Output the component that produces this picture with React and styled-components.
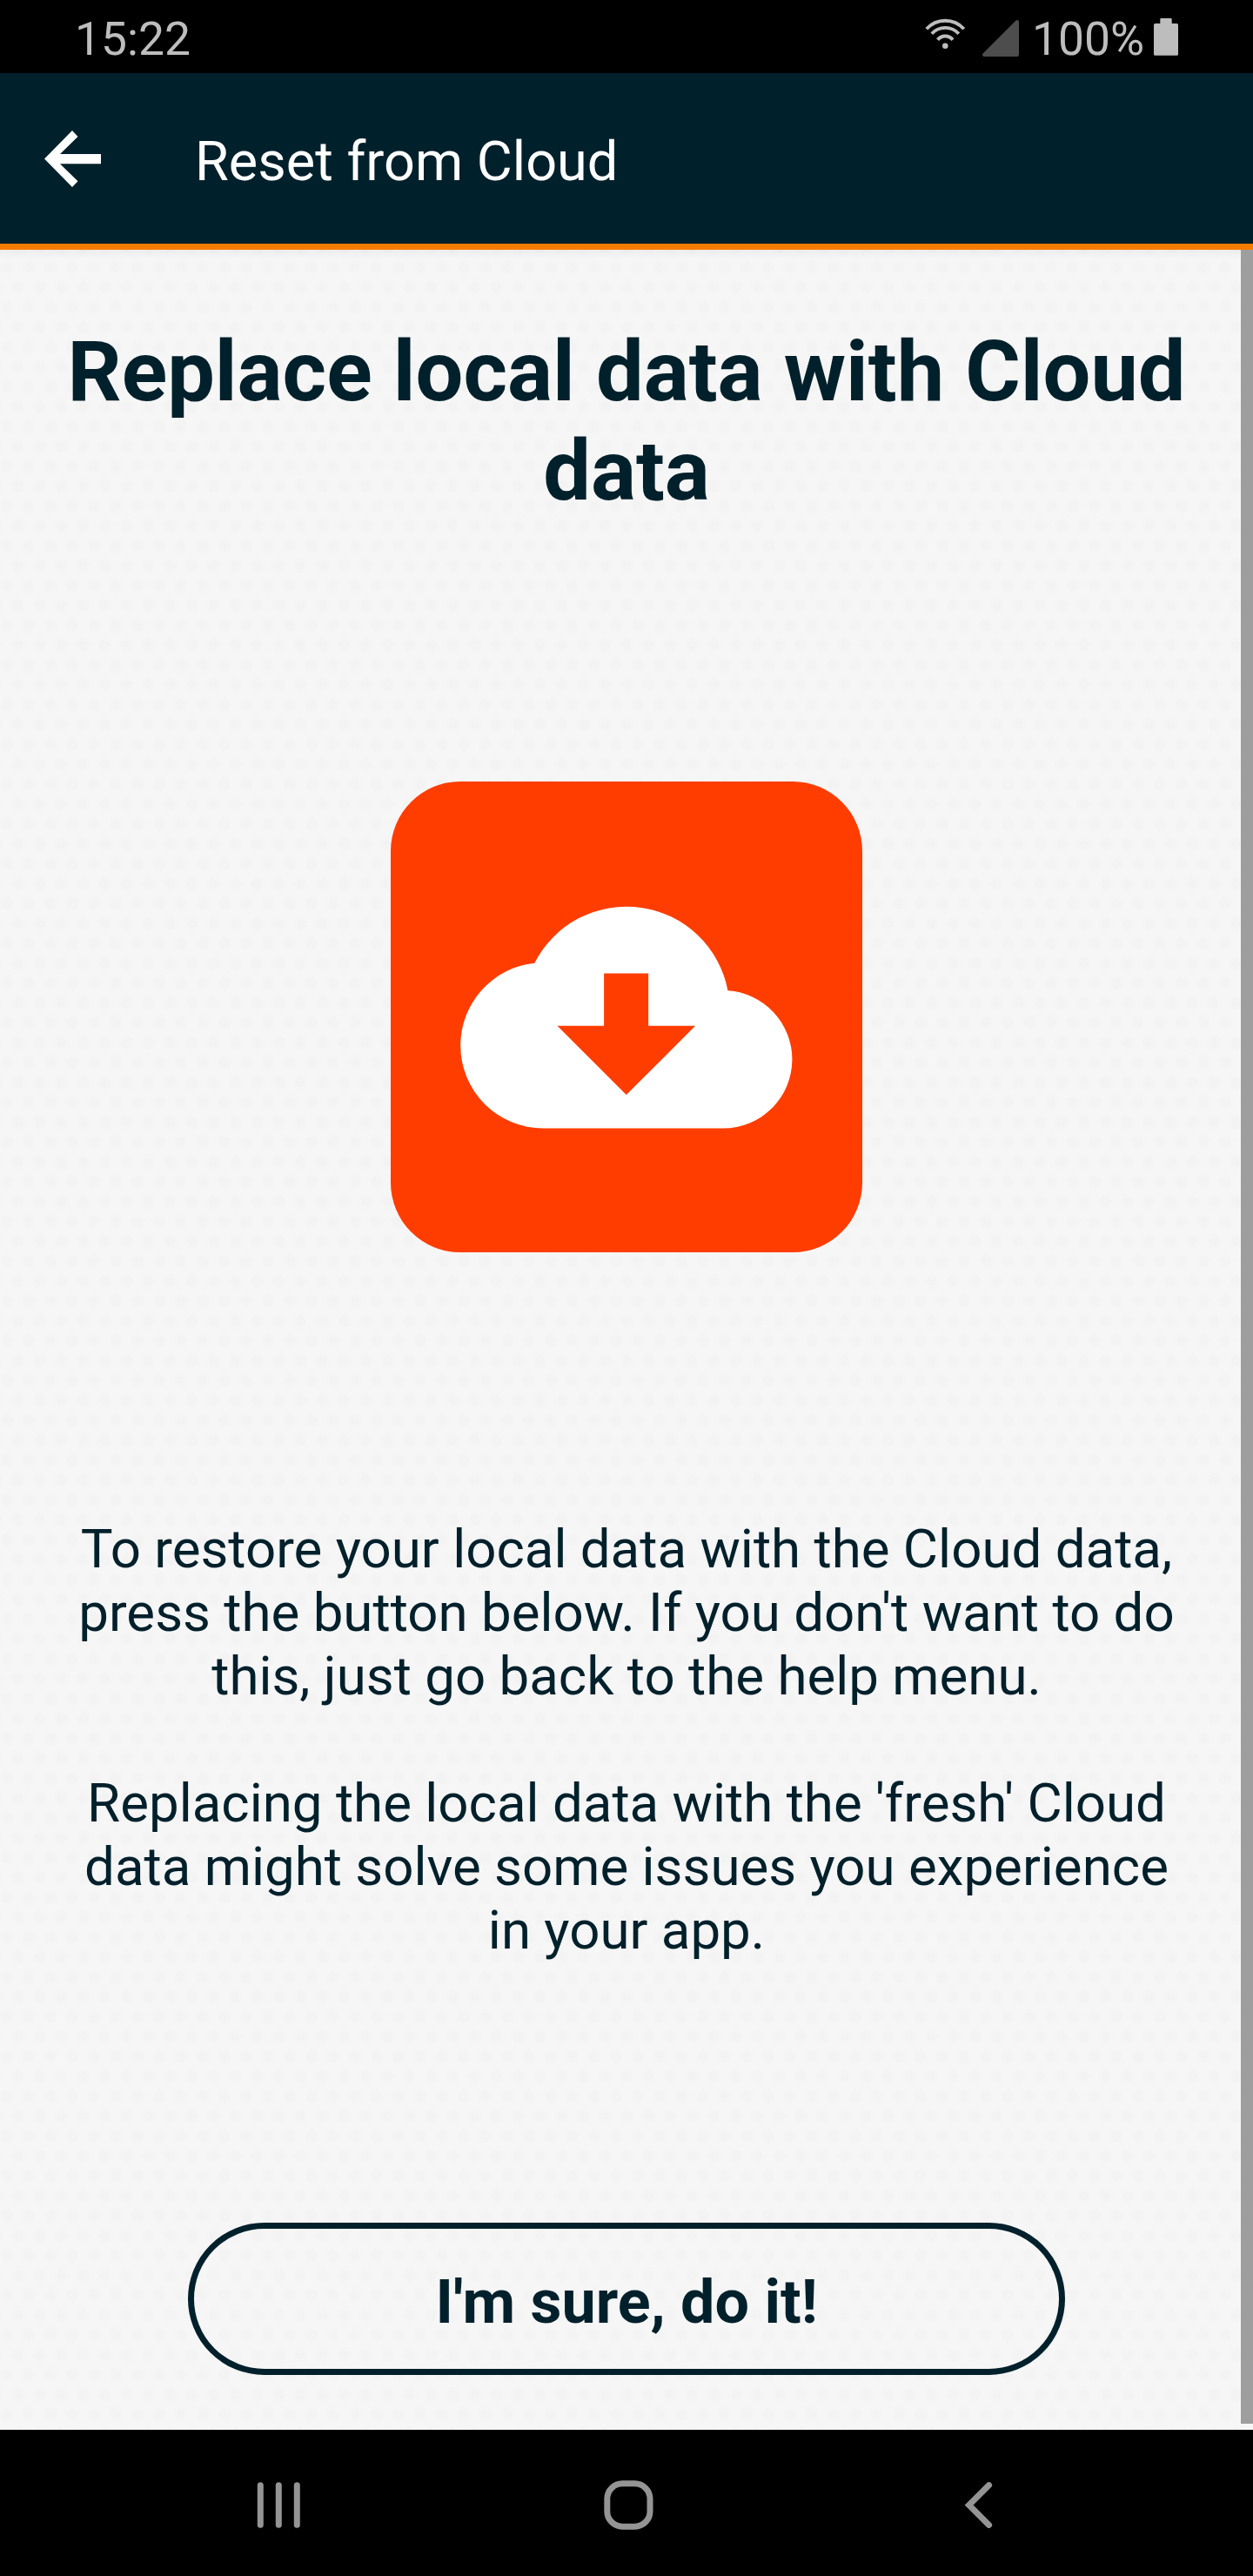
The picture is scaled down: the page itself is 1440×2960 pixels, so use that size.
import React from "react";
import styled, { createGlobalStyle } from "styled-components";

const GlobalStyle = createGlobalStyle`
  *, *::before, *::after { box-sizing: border-box; }
  body { margin: 0; background: #000; font-family: Roboto, sans-serif; }
`;

const Screen = styled.div`
  display: flex;
  flex-direction: column;
  width: 1440px;
  height: 2960px;
  overflow: hidden;
`;

const StatusBar = styled.div`
  display: flex;
  align-items: center;
  height: 84px;
  padding: 0 86px;
  background: #000;
  color: #bdbdbd;
  font-size: 53.4px;
  line-height: 64px;
`;

const Clock = styled.span`
  margin-right: auto;
  padding-top: 5px;
`;

const StatusIcon = styled.svg`
  display: block;
  flex: none;
  width: ${(p) => p.$w}px;
  height: 84px;
  margin-right: ${(p) => p.$gap || 0}px;
`;

const BatteryLevel = styled.span`
  margin-right: 11px;
  padding-top: 5px;
`;

const Header = styled.header`
  display: flex;
  align-items: center;
  height: 203px;
  padding-left: 51px;
  background: #00202b;
  border-bottom: 7px solid #f57c00;
`;

const BackIcon = styled.svg`
  display: block;
  width: 65px;
  height: 65px;
  margin-right: 108px;
`;

const Title = styled.div`
  padding-top: 8px;
  color: #fff;
  font-size: 63px;
  line-height: 74px;
`;

const Body = styled.main`
  display: flex;
  height: 2505px;
  background:
    linear-gradient(rgba(0, 0, 0, 0.035), transparent) 0 0 / 100% 12px no-repeat,
    radial-gradient(circle, #f3f3f3 0 4px, transparent 10px) -4.5px -2.8px / 25px 45.7px,
    radial-gradient(circle, #f3f3f3 0 4px, transparent 10px) 8px 20px / 25px 45.7px,
    #f6f6f6;
`;

const Content = styled.div`
  display: flex;
  flex-direction: column;
  align-items: center;
  width: 1426px;
  padding: 83px 0 0 14px;
  color: #00202b;
  text-align: center;
`;

const Scrollbar = styled.div`
  width: 14px;
  height: 2498px;
  background: #9e9e9e;
`;

const Heading = styled.h1`
  margin: 0;
  font-size: 97.2px;
  font-weight: 700;
  line-height: 114px;
  white-space: nowrap;
`;

const CloudTile = styled.div`
  width: 542px;
  height: 541px;
  margin-top: 300px;
  border-radius: 80px;
  background: #ff3d00;

  svg {
    display: block;
  }
`;

const Message = styled.p`
  margin: ${(p) => p.$top}px 0 0;
  font-size: 61.82px;
  line-height: 73px;
  white-space: nowrap;
`;

const ConfirmButton = styled.button`
  width: 1008px;
  height: 175px;
  margin: 299px 0 0;
  padding: 6px 0 0;
  border: 7px solid #00202b;
  border-radius: 88px;
  background: transparent;
  color: #00202b;
  font: 700 70px/82px Roboto, sans-serif;
`;

const NavBar = styled.nav`
  display: flex;
  align-items: center;
  height: 168px;
  padding: 5px 0 0 295px;
  background: #000;
`;

const NavIcon = styled.svg`
  display: block;
  flex: none;
  margin-right: ${(p) => p.$gap || 0}px;
  stroke: #949494;
  stroke-width: 7;
  stroke-linecap: round;
  fill: none;
`;

export default function App() {
  return (
    <Screen>
      <GlobalStyle />
      <StatusBar>
        <Clock>15:22</Clock>
        <StatusIcon $w={50} $gap={17} viewBox="1062 0 50 84">
          <g fill="none" stroke="#bdbdbd" strokeWidth="3.9">
            <path d="M1064.8 33.3 A29 29 0 0 1 1107.8 33.3" />
            <path d="M1070.8 38.8 A20.8 20.8 0 0 1 1101.8 38.8" />
            <path d="M1077.6 45.7 A11 11 0 0 1 1095 45.7" />
          </g>
          <circle cx="1086.3" cy="52.7" r="3.3" fill="#bdbdbd" />
        </StatusIcon>
        <StatusIcon $w={42} $gap={15} viewBox="1129 0 42 84">
          <path d="M1131 63 L1169 25 V63Z" fill="#4d4d4d" stroke="#4d4d4d" strokeWidth="4" strokeLinejoin="round" />
        </StatusIcon>
        <BatteryLevel>100%</BatteryLevel>
        <StatusIcon $w={28} viewBox="1326 0 28 84">
          <path
            d="M1334.5 21H1345.5Q1346.7 21 1346.7 22.2V27H1352.5Q1354 27 1354 28.5V62.2Q1354 63.7 1352.5 63.7H1327.5Q1326 63.7 1326 62.2V28.5Q1326 27 1327.5 27H1333.3V22.2Q1333.3 21 1334.5 21Z"
            fill="#bdbdbd"
          />
        </StatusIcon>
      </StatusBar>

      <Header>
        <BackIcon viewBox="51 149 65 65">
          <path d="M51 181.5L83 149L89.5 156L69 176H116V187.2H69L89.5 207.3L83 214Z" fill="#fff" />
        </BackIcon>
        <Title>Reset from Cloud</Title>
      </Header>

      <Body>
        <Content>
          <Heading>
            Replace local data with Cloud
            <br />
            data
          </Heading>
          <CloudTile>
            <svg width="542" height="541" viewBox="51 49 1466 1462" preserveAspectRatio="none">
              <path
                d="M498 613A320.6 320.6 0 0 1 1099 698.5A214 214 0 0 1 1299 912A214 214 0 0 1 1085 1126H525A257 257 0 0 1 268 869A257 257 0 0 1 498 613Z"
                fill="#fff"
              />
              <path d="M714 645H852V808H998L783.5 1022L569 808H714Z" fill="#ff3d00" />
            </svg>
          </CloudTile>
          <Message $top={305}>
            To restore your local data with the Cloud data,
            <br />
            press the button below. If you don't want to do
            <br />
            this, just go back to the help menu.
          </Message>
          <Message $top={73}>
            Replacing the local data with the 'fresh' Cloud
            <br />
            data might solve some issues you experience
            <br />
            in your app.
          </Message>
          <ConfirmButton>I'm sure, do it!</ConfirmButton>
        </Content>
        <Scrollbar />
      </Body>

      <NavBar>
        <NavIcon $gap={349} width="50" height="53" viewBox="0 0 50 53">
          <path d="M4.3 3.7V49.3M25.3 3.7V49.3M46.3 3.7V49.3" />
        </NavIcon>
        <NavIcon $gap={357} width="57" height="57" viewBox="0 0 57 57">
          <rect x="3.8" y="3.8" width="49.2" height="49.4" rx="17.5" />
        </NavIcon>
        <NavIcon width="33" height="53" viewBox="0 0 33 53">
          <path d="M28.6 3.6L5.6 26.5L28.6 49.4" />
        </NavIcon>
      </NavBar>
    </Screen>
  );
}
